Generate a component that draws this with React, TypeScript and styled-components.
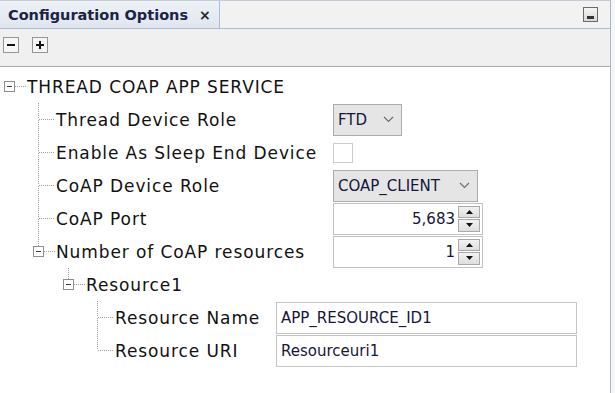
import React from "react";
import styled, { createGlobalStyle } from "styled-components";

const GlobalStyle = createGlobalStyle`
  html, body {
    margin: 0;
    padding: 0;
    background: #f6f6f6;
  }
  body {
    font-family: "DejaVu Sans", Verdana, sans-serif;
  }
`;

const Panel = styled.div`
  width: 610px;
  height: 393px;
  display: flex;
  flex-direction: column;
  background: #fff;
  border-right: 1px solid #a3b8d0;
  overflow: hidden;
`;

const TabBar = styled.div`
  height: 27px;
  display: flex;
  justify-content: space-between;
  align-items: stretch;
  background: #f2f2f2;
  border-top: 1px solid #c4ccd6;
  border-bottom: 1px solid #a9bdd5;
`;

const Tab = styled.div`
  width: 211px;
  padding: 0 0 0 8px;
  display: flex;
  align-items: center;
  gap: 11px;
  background: linear-gradient(#eef2f7, #dfe6ee);
  border-right: 1px solid #a9bdd5;
  color: #1b2444;
  font-size: 14.5px;
  font-weight: bold;
`;

const CloseMark = styled.span`
  font-size: 14px;
  color: #2a2a2a;
`;

const MinimizeBox = styled.div`
  align-self: center;
  width: 13px;
  height: 11px;
  margin-right: 12px;
  display: flex;
  align-items: flex-end;
  justify-content: center;
  padding-bottom: 2px;
  box-sizing: content-box;
  background: linear-gradient(#f4f4f4, #d8d8d8);
  border: 1px solid #6a6a6a;

  &::after {
    content: "";
    width: 7px;
    height: 3px;
    background: #333;
  }
`;

const Toolbar = styled.div`
  height: 38px;
  display: flex;
  align-items: flex-start;
  gap: 13px;
  padding: 8px 0 0 3px;
  box-sizing: border-box;
  background: #f0f0f0;
  border-bottom: 1px solid #a3a9b0;
`;

const ToolButton = styled.div`
  width: 14px;
  height: 14px;
  display: flex;
  align-items: center;
  justify-content: center;
  background: #f6f6f6;
  border: 1px solid #959595;
`;

const Tree = styled.div`
  flex: 1;
  padding-top: 3px;
  background: #fff;
`;

const Row = styled.div<{ $indent: number }>`
  height: 33px;
  display: flex;
  align-items: center;
  padding-left: ${(p) => p.$indent}px;
`;

const BranchSvg = styled.svg`
  flex: none;
  display: block;
`;

const Label = styled.div<{ $width?: number }>`
  flex: none;
  width: ${(p) => (p.$width ? `${p.$width}px` : "auto")};
  font-size: 17px;
  letter-spacing: 0.9px;
  color: #111;
  white-space: nowrap;
`;

const Select = styled.div<{ $width: number }>`
  width: ${(p) => p.$width}px;
  height: 32px;
  box-sizing: border-box;
  display: flex;
  align-items: center;
  justify-content: space-between;
  padding: 0 7px 0 4px;
  background: #e5e5e5;
  border: 1px solid #acacac;
  color: #15163a;
  font-size: 15px;
`;

const CheckBox = styled.div`
  width: 18px;
  height: 18px;
  background: #fff;
  border: 1px solid #cdcdcd;
`;

const Spinner = styled.div`
  width: 150px;
  height: 32px;
  box-sizing: border-box;
  display: flex;
  align-items: stretch;
  background: #fff;
  border: 1px solid #c2c2c2;
`;

const SpinValue = styled.div`
  flex: 1;
  display: flex;
  align-items: center;
  justify-content: flex-end;
  padding-right: 3px;
  color: #15163a;
  font-size: 15px;
`;

const SpinButtons = styled.div`
  width: 22px;
  display: flex;
  flex-direction: column;
  gap: 1px;
  padding: 2px 2px 2px 0;
`;

const SpinButton = styled.div`
  flex: 1;
  display: flex;
  align-items: center;
  justify-content: center;
  background: linear-gradient(#f2f2f2, #dedede);
  border: 1px solid #a9a9a9;
`;

const Field = styled.div`
  width: 301px;
  height: 32px;
  box-sizing: border-box;
  display: flex;
  align-items: center;
  padding-left: 4px;
  background: #fff;
  border: 1px solid #c4c4c4;
  color: #15163a;
  font-size: 15px;
`;

const dots = { stroke: "#9c9c9c", strokeDasharray: "1 1", shapeRendering: "crispEdges" as const };

function Branch({ up, down, box }: { up?: boolean; down?: boolean; box?: boolean }) {
  return (
    <BranchSvg width="27" height="33" viewBox="0 0 27 33">
      {up && <line x1="9.5" y1="0" x2="9.5" y2="16" {...dots} />}
      {down && <line x1="9.5" y1="17" x2="9.5" y2="33" {...dots} />}
      <line x1={box ? 15 : 10} y1="16.5" x2="26" y2="16.5" {...dots} />
      {box && (
        <>
          <rect x="4.5" y="11.5" width="10" height="10" fill="#fff" stroke="#8e8e8e" shapeRendering="crispEdges" />
          <line x1="7" y1="16.5" x2="12" y2="16.5" stroke="#3a3a3a" shapeRendering="crispEdges" />
        </>
      )}
    </BranchSvg>
  );
}

function Chevron() {
  return (
    <svg width="11" height="7" viewBox="0 0 11 7">
      <path d="M1 1 L5.5 5.5 L10 1" fill="none" stroke="#6a6a6a" strokeWidth="1.1" />
    </svg>
  );
}

function Arrow({ down }: { down?: boolean }) {
  return (
    <svg width="7" height="4" viewBox="0 0 7 4">
      <path d={down ? "M0 0 H7 L3.5 4 Z" : "M0 4 H7 L3.5 0 Z"} fill="#111" />
    </svg>
  );
}

function NumberSpinner({ value }: { value: string }) {
  return (
    <Spinner>
      <SpinValue>{value}</SpinValue>
      <SpinButtons>
        <SpinButton>
          <Arrow />
        </SpinButton>
        <SpinButton>
          <Arrow down />
        </SpinButton>
      </SpinButtons>
    </Spinner>
  );
}

function ToolIcon({ plus }: { plus?: boolean }) {
  return (
    <ToolButton>
      <svg width="10" height="10" viewBox="0 0 10 10">
        <rect x="1" y="4" width="8" height="2" fill="#111" />
        {plus && <rect x="4" y="1" width="2" height="8" fill="#111" />}
      </svg>
    </ToolButton>
  );
}

const MAIN = 277;
const RES = 161;

export default function App() {
  return (
    <>
      <GlobalStyle />
      <Panel>
        <TabBar>
          <Tab>
            Configuration Options
            <CloseMark>×</CloseMark>
          </Tab>
          <MinimizeBox />
        </TabBar>
        <Toolbar>
          <ToolIcon />
          <ToolIcon plus />
        </Toolbar>
        <Tree>
          <Row $indent={0}>
            <Branch box />
            <Label>THREAD COAP APP SERVICE</Label>
          </Row>
          <Row $indent={29}>
            <Branch up down />
            <Label $width={MAIN}>Thread Device Role</Label>
            <Select $width={69}>
              FTD
              <Chevron />
            </Select>
          </Row>
          <Row $indent={29}>
            <Branch up down />
            <Label $width={MAIN}>Enable As Sleep End Device</Label>
            <CheckBox />
          </Row>
          <Row $indent={29}>
            <Branch up down />
            <Label $width={MAIN}>CoAP Device Role</Label>
            <Select $width={145}>
              COAP_CLIENT
              <Chevron />
            </Select>
          </Row>
          <Row $indent={29}>
            <Branch up down />
            <Label $width={MAIN}>CoAP Port</Label>
            <NumberSpinner value="5,683" />
          </Row>
          <Row $indent={29}>
            <Branch up box />
            <Label $width={MAIN}>Number of CoAP resources</Label>
            <NumberSpinner value="1" />
          </Row>
          <Row $indent={59}>
            <Branch up box />
            <Label>Resource1</Label>
          </Row>
          <Row $indent={88}>
            <Branch up down />
            <Label $width={RES}>Resource Name</Label>
            <Field>APP_RESOURCE_ID1</Field>
          </Row>
          <Row $indent={88}>
            <Branch up />
            <Label $width={RES}>Resource URI</Label>
            <Field>Resourceuri1</Field>
          </Row>
        </Tree>
      </Panel>
    </>
  );
}
